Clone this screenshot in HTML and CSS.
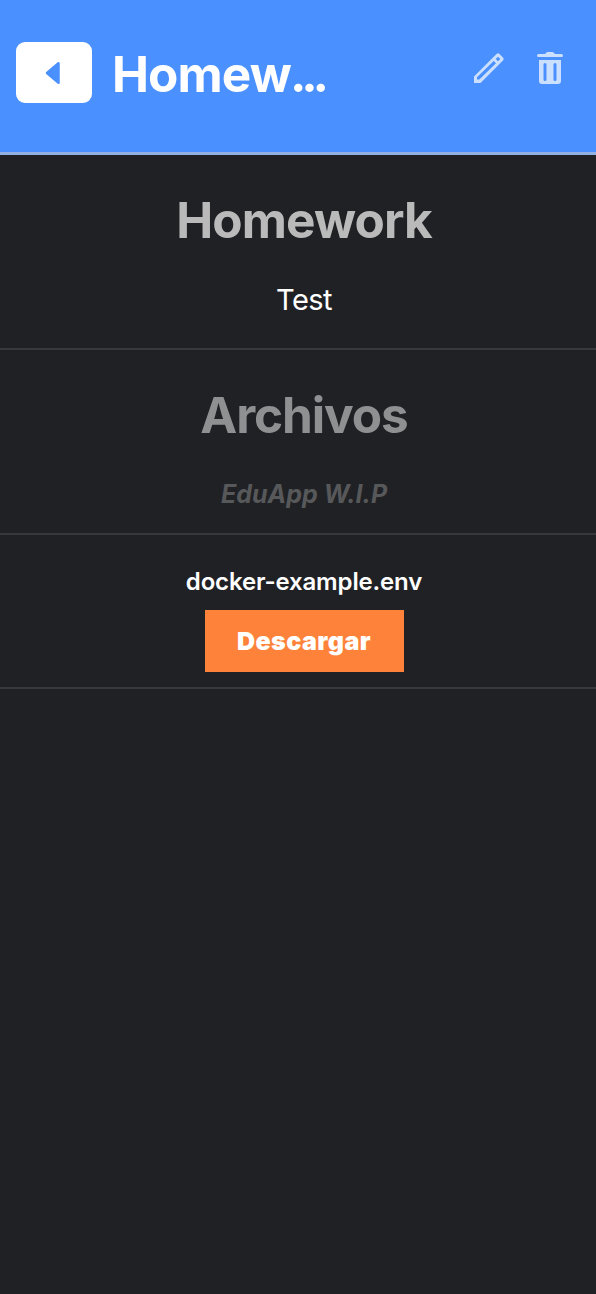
FILE: index.html
```html
<!DOCTYPE html>
<html lang="es">
<head>
<meta charset="utf-8">
<title>Homework</title>
<link rel="stylesheet" href="styles.css">
</head>
<body>
<header class="topbar">
  <button class="back" aria-label="Volver">
    <svg class="back-icon" width="16" height="24" viewBox="0 0 16 24"><path d="M2 12 13.500 2.300V21.700Z" fill="#4a90ff" stroke="#4a90ff" stroke-width="2.500" stroke-linejoin="round"/></svg>
  </button>
  <h1 class="topbar-title">Homew<span class="dots">...</span></h1>
  <div class="actions">
    <svg width="32" height="32" viewBox="0 0 32 32"><path fill="#cbdfff" fill-rule="evenodd" d="M1 31V24.500L23.500 2Q25 0.500 26.500 2L30 5.500Q31.500 7 30 8.500L7.500 31ZM4 27.500H6.300L23 11.300 20.700 9 4 25.200ZM25 4.700 22.700 7 25 9.300 27.300 7Z"/></svg>
    <svg width="26" height="32" viewBox="0 0 26 32"><path fill="#cbdfff" fill-rule="evenodd" d="M9 1Q9.500 0 11 0H15Q16.500 0 17 1L18 2H24.500Q26 2 26 3.500T24.500 5H1.500Q0 5 0 3.500T1.500 2H8ZM2 8H24V29Q24 32 21 32H5Q2 32 2 29ZM8 11Q6.500 11 6.500 12.500V27.500Q6.500 29 8 29T9.500 27.500V12.500Q9.500 11 8 11ZM18 11Q16.500 11 16.500 12.500V27.500Q16.500 29 18 29T19.500 27.500V12.500Q19.500 11 18 11Z"/></svg>
  </div>
</header>
<main class="content">
  <section class="panel panel-info">
    <h2 class="heading heading-name">Homework</h2>
    <p class="description">Test</p>
  </section>
  <section class="panel panel-files">
    <h2 class="heading heading-files">Archivos</h2>
    <p class="note">EduApp W.I.P</p>
  </section>
  <section class="panel panel-file">
    <p class="filename">docker-example.env</p>
    <button class="download">Descargar</button>
  </section>
</main>
</body>
</html>
```

FILE: styles.css
```css
* { box-sizing: border-box; }
body {
  margin: 0;
  min-height: 1294px;
  background: #202125;
  color: #fff;
  font-family: Inter, "Liberation Sans", sans-serif;
  overflow: hidden;
}
h1, h2, p { margin: 0; white-space: nowrap; }
button { border: 0; padding: 0; font-family: inherit; }
.topbar {
  display: flex;
  align-items: flex-start;
  height: 155px;
  padding: 42px 33px 0 16px;
  background: #4a90ff;
  border-bottom: 3px solid #94b1e3;
}
.back {
  display: flex;
  align-items: center;
  justify-content: center;
  width: 76px;
  height: 61px;
  border-radius: 9px;
  background: #fff;
}
.back-icon { margin-right: 3px; }
.topbar-title {
  margin: 2px 0 0 20px;
  font-size: 49.500px;
  line-height: 60px;
  font-weight: 700;
  letter-spacing: -0.900px;
}
.dots { margin-left: -1px; letter-spacing: -5.200px; }
.actions { display: flex; gap: 32px; margin: 10px 0 0 auto; }
.content { width: 608px; }
.panel {
  display: flex;
  flex-direction: column;
  align-items: center;
  border-bottom: 2px solid #37383c;
}
.panel-info { height: 195px; padding-top: 35px; }
.panel-files { height: 185px; padding-top: 35px; }
.panel-file { height: 154px; padding-top: 32px; }
.heading { font-size: 49.500px; line-height: 60px; font-weight: 700; letter-spacing: -0.900px; }
.heading-name { color: #bababa; }
.heading-files { color: #8f9092; letter-spacing: -1.100px; }
.description { margin-top: 32px; font-size: 29px; line-height: 36px; letter-spacing: -0.500px; }
.note { margin-top: 34px; font-size: 25px; line-height: 30px; font-weight: 700; font-style: italic; color: #57585a; }
.filename { font-size: 24px; line-height: 30px; font-weight: 600; letter-spacing: -0.150px; }
.download {
  width: 199px;
  height: 62px;
  margin-top: 13px;
  background: #ff823a;
  color: #fff;
  font-size: 25px;
  font-weight: 900;
  letter-spacing: 0.450px;
}
```
